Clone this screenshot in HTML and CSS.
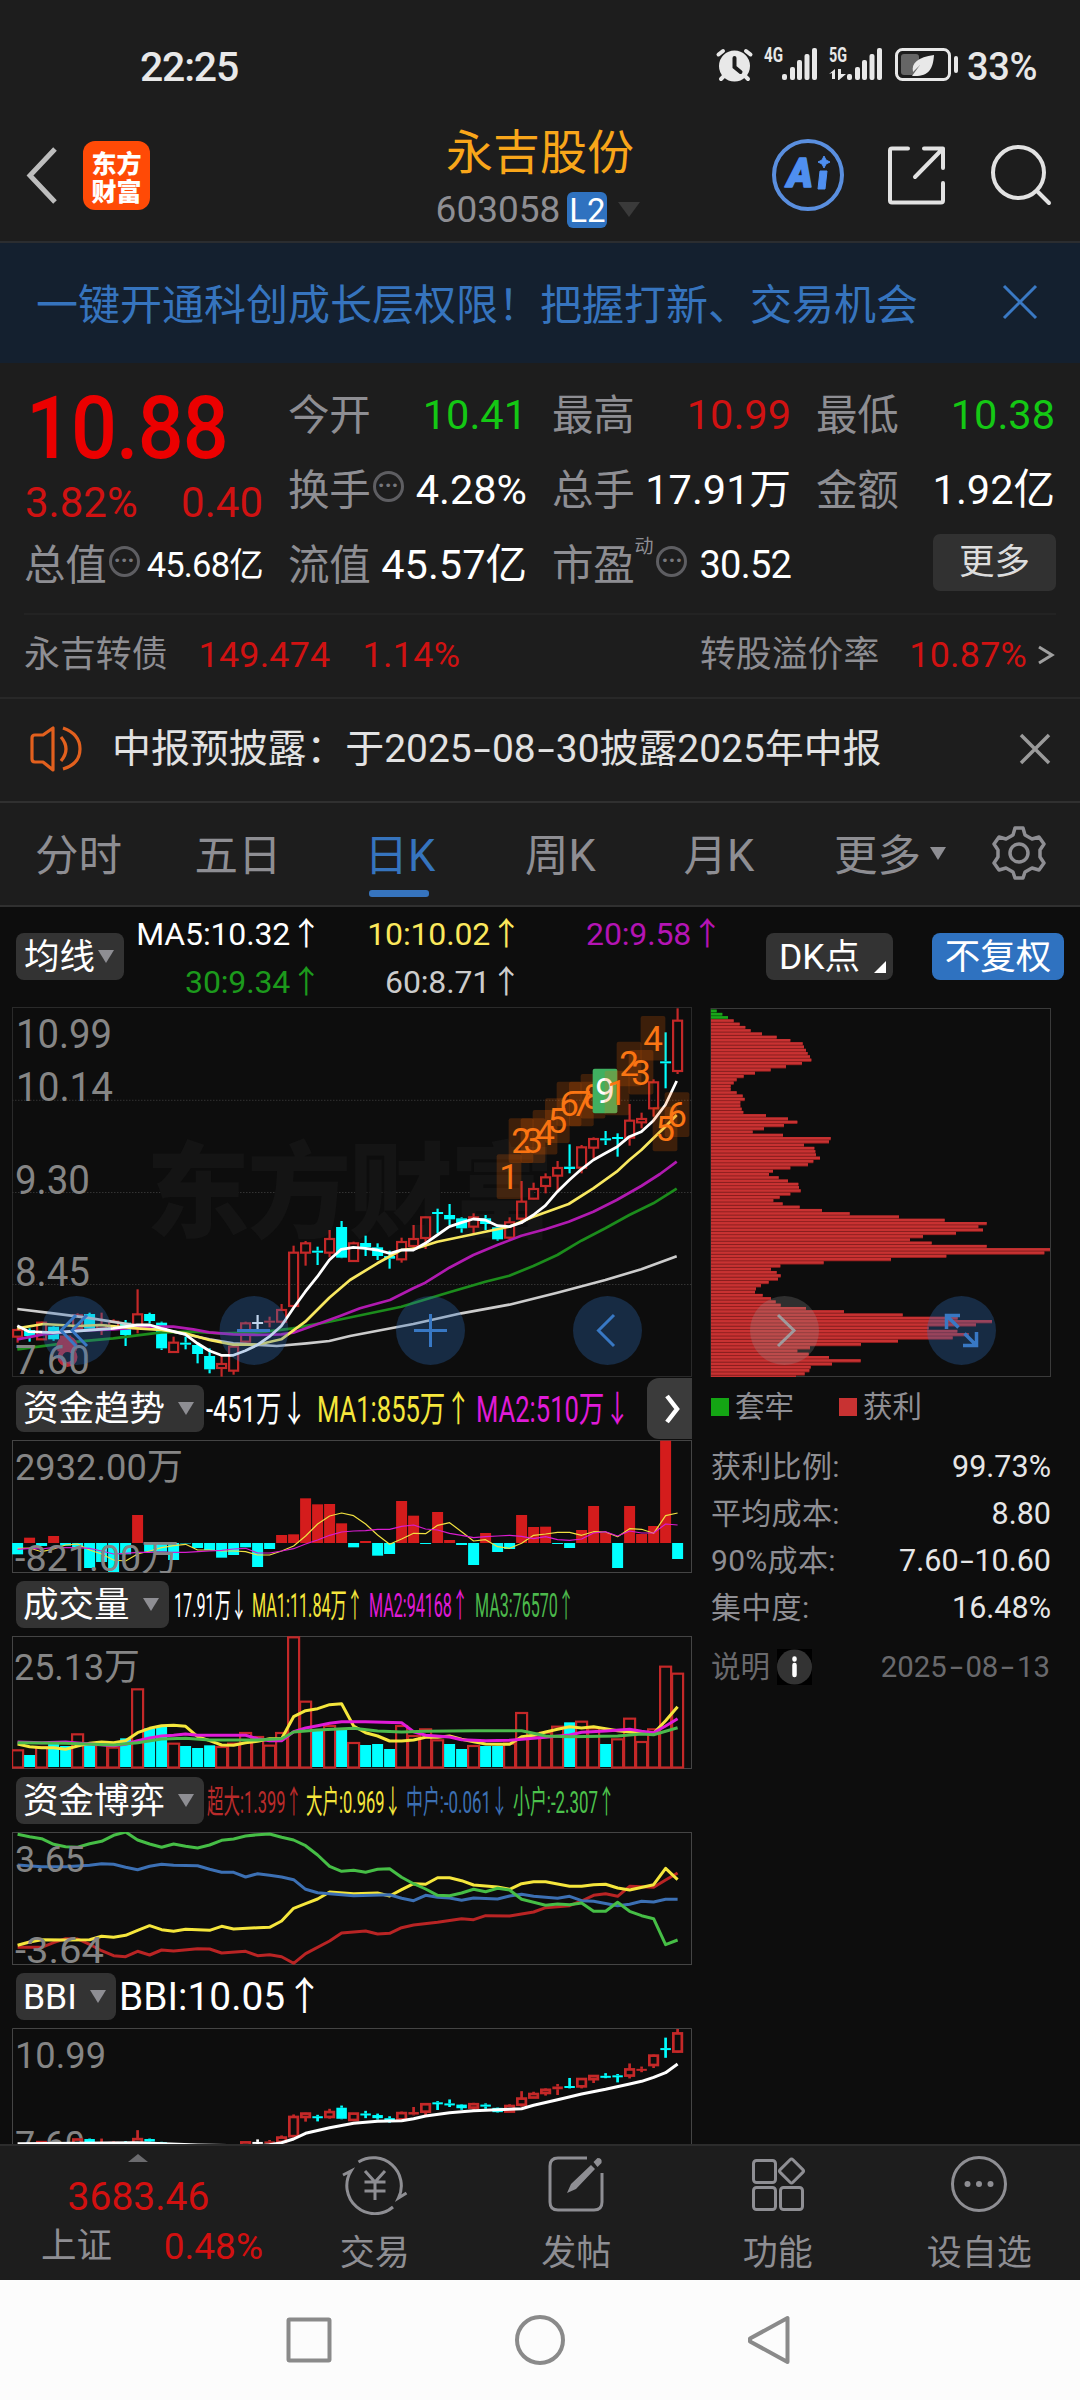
FILE: index.html
```html
<!DOCTYPE html>
<html lang="zh-CN">
<head>
<meta charset="utf-8">
<title>永吉股份 603058</title>
<link rel="stylesheet" href="styles.css">
</head>
<body>
<div class="status">
  <span class="clock">22:25</span>
  <svg class="status-icons" width="245" height="50" viewBox="0 0 245 50">
    <g fill="#e8e8e8" stroke="#e8e8e8" stroke-linecap="round">
      <circle cx="19.500" cy="21" r="15.500" stroke="none"/>
      <path d="M3.500 9.500 8 6M35.500 9.500 31 6M9 31 6 34M30 31l3 3" stroke-width="4" fill="none"/>
      <path d="M19.500 13v9l6 5" stroke="#1d1d1d" stroke-width="4" fill="none"/>
    </g>
    <g fill="#e8e8e8">
      <rect x="67" y="29" width="5" height="6" rx="2"/><rect x="75" y="22" width="5" height="13" rx="2"/><rect x="82" y="15" width="5" height="20" rx="2"/><rect x="89.500" y="9" width="5" height="26" rx="2"/><rect x="97" y="3" width="5" height="32" rx="2"/>
      <rect x="132" y="29" width="5" height="6" rx="2"/><rect x="140" y="22" width="5" height="13" rx="2"/><rect x="147" y="15" width="5" height="20" rx="2"/><rect x="154.500" y="9" width="5" height="26" rx="2"/><rect x="162" y="3" width="5" height="32" rx="2"/>
      <path d="M114 29l6-5v10h-3v-6zM123 24h3v5h5l-7 6h-1z"/>
      <rect x="239" y="11" width="4" height="17" rx="2"/>
      <text x="49" y="17" font-size="20" font-weight="700" textLength="19" lengthAdjust="spacingAndGlyphs">4G</text>
      <text x="114" y="17" font-size="20" font-weight="700" textLength="18" lengthAdjust="spacingAndGlyphs">5G</text>
    </g>
    <rect x="181.500" y="4.500" width="53" height="30" rx="6" fill="none" stroke="#e8e8e8" stroke-width="3"/>
    <rect x="186" y="9" width="18" height="21" rx="3" fill="#666"/>
    <path d="M219 10C203 12 196 18 198 27l7-7-8 11 3 0C214 31 218 24 219 10z" fill="#e8e8e8"/>
  </svg>
  <span class="battery">33%</span>
</div>

<header class="head">
  <svg class="back" width="34" height="58" viewBox="0 0 34 58"><path d="M30 2 5 28.500 30 55" fill="none" stroke="#bdbdbd" stroke-width="5"/></svg>
  <div class="logo"><span>东方</span><span>财富</span></div>
  <div class="title">
    <h1>永吉股份</h1>
    <div class="code"><span>603058</span><b>L2</b><i class="tri"></i></div>
  </div>
  <svg class="head-icons" width="290" height="80" viewBox="0 0 290 80">
    <circle cx="38" cy="41" r="34" fill="none" stroke="#5a8fdf" stroke-width="4"/>
    <g fill="#4f8ff0" stroke="#4f8ff0" stroke-linejoin="round"><text x="17" y="53" font-size="40" font-weight="900" font-style="italic" textLength="26" lengthAdjust="spacingAndGlyphs" stroke-width="1.500">A</text><path d="M50 37h7l-2 18h-7zM54 22l2 4 4 2-4 2-2 4-2-4-4-2 4-2z"/></g>
    <g fill="none" stroke="#e2e2e2" stroke-width="4" stroke-linecap="round" stroke-linejoin="round">
      <path d="M138 14.500h-16q-2 0-2 2v50q0 2 2 2h49q2 0 2-2V49M154 14.500h19V34M172 15.500 145 43"/>
      <circle cx="248.500" cy="38.500" r="25.500"/><path d="m267 57 12 12"/>
    </g>
  </svg>
</header>

<div class="banner">
  <span>一键开通科创成长层权限！把握打新、交易机会</span>
  <svg width="36" height="36" viewBox="0 0 36 36"><path d="M2 2 34 34M34 2 2 34" stroke="#3a79c4" stroke-width="3"/></svg>
</div>

<section class="quote">
  <div class="price-box">
    <strong>10.88</strong>
    <div class="row red"><span>3.82%</span><span>0.40</span></div>
  </div>
  <div class="cell"><label>今开</label><span class="green">10.41</span></div>
  <div class="cell"><label>最高</label><span class="red">10.99</span></div>
  <div class="cell"><label>最低</label><span class="green">10.38</span></div>
  <div class="cell"><label>换手<i class="dots">···</i></label><span>4.28%</span></div>
  <div class="cell"><label>总手</label><span>17.91万</span></div>
  <div class="cell"><label>金额</label><span>1.92亿</span></div>
  <div class="cell"><label>总值<i class="dots">···</i></label><span class="sm">45.68亿</span></div>
  <div class="cell"><label>流值</label><span>45.57亿</span></div>
  <div class="cell"><label>市盈<sup>动</sup><i class="dots">···</i></label><span class="md">30.52</span></div>
  <div class="cell end"><button>更多</button></div>
</section>

<div class="bond">
  <span>永吉转债</span><span class="red b1">149.474</span><span class="red b2">1.14%</span>
  <span class="push">转股溢价率</span><span class="red b3">10.87%</span>
  <svg width="18" height="20" viewBox="0 0 18 20"><path d="M2 2 15 10 2 18" fill="none" stroke="#a0a0a0" stroke-width="3"/></svg>
</div>

<div class="notice">
  <svg width="54" height="48" viewBox="0 0 54 48"><g fill="none" stroke="#e2601e" stroke-width="3.200"><path d="M3 13q0-3 3-3h8L24 3v42L14 37H6q-3 0-3-3z" stroke-linejoin="round"/><path d="M32 12q10 12 0 24M34 3q17 6 17 21T34 44"/></g></svg>
  <span>中报预披露：于2025<i class="dash">-</i>08<i class="dash">-</i>30披露2025年中报</span>
  <svg class="x" width="32" height="32" viewBox="0 0 32 32"><path d="M2 2 30 30M30 2 2 30" stroke="#9a9a9a" stroke-width="3.500"/></svg>
</div>

<nav class="tabs">
  <a>分时</a><a>五日</a><a class="on">日K</a><a>周K</a><a>月K</a><a>更多<i class="tri"></i></a>
  <svg width="56" height="56" viewBox="0 0 56 56"><g fill="none" stroke="#8e8e93" stroke-width="3.500" stroke-linejoin="round"><path d="M24 3h8l2 7 7 4 7-2 5 7-4 6v7l4 6-5 7-7-2-7 4-2 6h-8l-2-6-7-4-7 2-5-7 4-6v-7l-4-6 5-7 7 2 7-4z"/><circle cx="28" cy="28" r="9"/></g></svg>
</nav>

<div class="ma">
  <div class="pill">均线<i class="tri"></i></div>
  <div class="ma-grid">
    <span class="c-w">MA5:10.32<em>↑</em></span><span class="c-y">10:10.02<em>↑</em></span><span class="c-m">20:9.58<em>↑</em></span>
    <span class="c-g">30:9.34<em>↑</em></span><span class="c-s">60:8.71<em>↑</em></span>
  </div>
  <div class="pill dk">DK点</div>
  <div class="pill blue">不复权</div>
</div>

<main class="charts">
  <div class="left">
    <svg id="kline" width="680" height="370" viewBox="12 1007 680 370"></svg>
    <div class="legend"><div class="pill">资金趋势<i class="tri"></i></div>
      <svg width="430" height="63"><g font-size="36"><text x="2" y="45" textLength="101" lengthAdjust="spacingAndGlyphs" fill="#fff">-451万↓</text><text x="113" y="45" textLength="154" lengthAdjust="spacingAndGlyphs" fill="#f5e63c">MA1:855万↑</text><text x="272" y="45" textLength="154" lengthAdjust="spacingAndGlyphs" fill="#e01bd8">MA2:510万↓</text></g></svg>
      <div class="more"><svg width="20" height="38" viewBox="0 0 20 38"><path d="M5 6 15 19 5 32" fill="none" stroke="#fff" stroke-width="4.500"/></svg></div>
    </div>
    <svg id="fund" width="680" height="133" viewBox="12 1440 680 133"></svg>
    <div class="legend"><div class="pill">成交量<i class="tri"></i></div>
      <svg width="430" height="63"><g font-size="33"><text x="5" y="44" textLength="73" lengthAdjust="spacingAndGlyphs" fill="#fff">17.91万↓</text><text x="83" y="44" textLength="111" lengthAdjust="spacingAndGlyphs" fill="#f5e63c">MA1:11.84万↑</text><text x="200" y="44" textLength="99" lengthAdjust="spacingAndGlyphs" fill="#e01bd8">MA2:94168↑</text><text x="306" y="44" textLength="99" lengthAdjust="spacingAndGlyphs" fill="#4cb94c">MA3:76570↑</text></g></svg>
    </div>
    <svg id="volume" width="680" height="133" viewBox="12 1636 680 133"></svg>
    <div class="legend"><div class="pill">资金博弈<i class="tri"></i></div>
      <svg width="430" height="63"><g font-size="32"><text x="3" y="44" textLength="95" lengthAdjust="spacingAndGlyphs" fill="#b92b2b">超大:1.399↑</text><text x="102" y="44" textLength="95" lengthAdjust="spacingAndGlyphs" fill="#f5e63c">大户:0.969↓</text><text x="202" y="44" textLength="102" lengthAdjust="spacingAndGlyphs" fill="#3c70b4">中户:-0.061↓</text><text x="309" y="44" textLength="102" lengthAdjust="spacingAndGlyphs" fill="#4cc24c">小户:-2.307↑</text></g></svg>
    </div>
    <svg id="game" width="680" height="133" viewBox="12 1832 680 133"></svg>
    <div class="legend"><div class="pill">BBI<i class="tri"></i></div>
      <svg width="430" height="63"><text x="3" y="45" font-size="39" textLength="205" lengthAdjust="spacingAndGlyphs" fill="#fff">BBI:10.05↑</text></svg>
    </div>
    <svg id="bbi" width="680" height="116" viewBox="12 2028 680 116"></svg>
  </div>
  <div class="right">
    <svg id="chips" width="342" height="370" viewBox="710 1007 342 370"></svg>
    <div class="keys"><i class="sq g"></i>套牢<i class="sq r"></i>获利</div>
    <dl>
      <dt>获利比例:</dt><dd>99.73%</dd>
      <dt>平均成本:</dt><dd>8.80</dd>
      <dt>90%成本:</dt><dd>7.60<i class="dash">-</i>10.60</dd>
      <dt>集中度:</dt><dd>16.48%</dd>
    </dl>
    <div class="explain"><span>说明</span><span class="info"><svg width="35" height="36" viewBox="0 0 35 36"><circle cx="17.500" cy="18" r="17.500" fill="#333"/><path d="M17.500 16v10M17.500 9.500v1" stroke="#fff" stroke-width="4.500" stroke-linecap="round"/></svg></span><time>2025<i class="dash">-</i>08<i class="dash">-</i>13</time></div>
  </div>
  <svg class="controls" width="1080" height="70" viewBox="0 1296 1080 70">
    <g fill="#2f72c0" fill-opacity=".3"><circle cx="76.500" cy="1330.500" r="34.500"/><circle cx="254" cy="1330.500" r="34.500"/><circle cx="430.500" cy="1330.500" r="34.500"/><circle cx="607.500" cy="1330.500" r="34.500"/><circle cx="961.500" cy="1330.500" r="34.500"/></g>
    <circle cx="784.500" cy="1330.500" r="34.500" fill="#999" fill-opacity=".25"/>
    <g fill="none" stroke="#3878c4" stroke-width="3">
      <path d="M76 1315 61 1330.500 76 1346M87 1315 72 1330.500 87 1346M237 1330.500h33M414 1330.500h33M430.500 1314v33M614 1315l-15.500 15.500 15.500 15.500"/>
      <path d="M946.500 1329v-13.500h13.500M947 1316l11.500 11.500M976.500 1332v13.500h-13.500M976 1345l-11.500-11.500" stroke-width="3.500"/>
      <path d="M778 1315l16 15.500-16 15.500" stroke="#a09a9c"/>
    </g>
  </svg>
</main>

<footer class="bar">
  <div class="index">
    <i class="up"></i>
    <strong>3683.46</strong>
    <div><span>上证</span><b>0.48%</b></div>
  </div>
  <div class="item"><svg width="68" height="62" viewBox="0 0 68 62"><g fill="none" stroke="#8e8e93" stroke-width="3"><path d="M17.500 9a28 28 0 0 1 40 36l8-5M52 54a28 28 0 0 1-42-36l-8 4" /><path d="M24 18l10 11 10-11M23.500 29h21M23.500 38h21M34 29v18"/></g></svg><span>交易</span></div>
  <div class="item"><svg width="58" height="62" viewBox="0 0 58 62"><path d="M40 5H11q-8 0-8 8v36q0 8 8 8h36q8 0 8-8V20" fill="none" stroke="#8e8e93" stroke-width="3"/><path d="M20 40l4-9 20-19 4 4-19 20zM46.500 9l4-4q5 0 4 5l-4 4z" fill="#8e8e93"/></svg><span>发帖</span></div>
  <div class="item"><svg width="58" height="62" viewBox="0 0 58 62"><g fill="none" stroke="#8e8e93" stroke-width="3"><rect x="4.500" y="7.500" width="22" height="22" rx="3"/><rect x="4.500" y="34.500" width="22" height="22" rx="3"/><rect x="31.500" y="34.500" width="22" height="22" rx="3"/><rect x="33.500" y="9" width="18" height="18" rx="2" transform="rotate(45 42.500 18)"/></g></svg><span>功能</span></div>
  <div class="item"><svg width="62" height="62" viewBox="0 0 62 62"><circle cx="31" cy="31" r="26.500" fill="none" stroke="#8e8e93" stroke-width="3"/><g fill="#8e8e93"><circle cx="19.500" cy="31" r="3"/><circle cx="31" cy="31" r="3"/><circle cx="42.500" cy="31" r="3"/></g></svg><span>设自选</span></div>
</footer>
<div class="sysnav">
  <svg width="1080" height="120" viewBox="0 2280 1080 120"><g fill="none" stroke="#8a8a8a" stroke-width="4" stroke-linejoin="round"><rect x="288.500" y="2319.500" width="41" height="41" rx="1"/><circle cx="540" cy="2340" r="23"/><path d="M787.500 2318v44L750 2341.500v-3z"/></g></svg>
</div>
<script src="script.js"></script>
</body>
</html>
```
FILE: styles.css
```css
* { box-sizing: border-box; }
body { margin: 0; width: 1080px; height: 2400px; overflow: hidden; background: #1d1d1d; color: #fff; font-family: Roboto, "Noto Sans CJK SC", sans-serif; }
svg { display: block; flex: none; font-family: Roboto, "Noto Sans CJK SC", sans-serif; }
i, em { font-style: normal; }
.red { color: #d01212; }
.green { color: #14c814; }
.tri { display: block; border: 8px solid transparent; border-top: 13px solid #8e8e93; border-bottom: 0; }
.dash { display: inline-block; width: .64em; text-align: center; transform: scaleX(1.6); }

.status { height: 110px; display: flex; align-items: flex-start; padding: 42px 0 0 140px; color: #e8e8e8; font-weight: 500; line-height: 50px; }
.clock { font-size: 41px; letter-spacing: -1.2px; width: 575px; }
.status-icons { margin-top: 3px; }
.battery { font-size: 38px; margin-left: 7px; letter-spacing: -.3px; }

.head { height: 133px; border-bottom: 2px solid #2b2d30; display: flex; position: relative; padding: 30px 25px; }
.back { margin-top: 7px; }
.logo { flex: none; width: 67px; height: 69px; margin: 1px 0 0 24px; border-radius: 12px; background: #ff4a06; display: flex; flex-direction: column; align-items: center; justify-content: center; font: 900 25px/28px "Noto Sans CJK SC", sans-serif; }
.title { flex: none; width: 400px; margin: -15px 0 0 190px; display: flex; flex-direction: column; align-items: center; }
.title h1 { margin: 0; font-size: 47px; line-height: 56px; font-weight: 400; color: #f9a61a; }
.code { display: flex; align-items: center; height: 50px; margin: 7px 0 0 -4px; font-size: 37px; color: #8e8e93; }
.code b { margin-left: 7px; width: 40px; height: 36px; line-height: 37px; border-radius: 6px; background: #2f72c0; color: #fff; font-weight: 400; font-size: 33px; text-align: center; }
.code .tri { margin-left: 11px; border-width: 15px 11px 0; border-top-color: #3a3a3a; }
.head-icons { margin: -6px 0 0 30px; }

.banner { height: 120px; background: #14202f; display: flex; align-items: center; justify-content: space-between; padding: 0 42px 3px 36px; font-size: 42px; color: #3674be; }

.quote { display: grid; grid-template-columns: repeat(4, 238px); grid-template-rows: repeat(3, 75px); column-gap: 26px; padding: 14px 25px 0; height: 250px; }
.price-box { grid-row: 1 / 3; }
.price-box strong { display: block; height: 90px; margin-left: 1px; font-size: 87px; line-height: 103px; font-weight: 500; color: #eb0000; letter-spacing: -1px; transform: scaleX(.93); transform-origin: 0 0; }
.row { display: flex; justify-content: space-between; font-size: 42px; line-height: 68px; }
.price-box .row { margin-top: 2px; }
.cell { display: flex; justify-content: space-between; align-items: center; font-size: 41.500px; line-height: 52px; letter-spacing: 0; white-space: nowrap; }
.cell label { display: flex; align-items: center; color: #8e8e93; letter-spacing: -.2px; margin: 2px 0 0 -1px; }
.cell .sm { font-size: 34.500px; letter-spacing: -.8px; }
.cell .md { font-size: 38px; letter-spacing: -.8px; }
.cell.end { justify-content: flex-end; }
.dots { width: 31px; height: 31px; margin: -9px 0 0 2px; border: 3px solid #5e5e62; border-radius: 50%; display: flex; align-items: center; justify-content: center; color: #77777c; font-size: 23px; line-height: 20px; font-weight: 700; letter-spacing: 0; }
sup { font-size: 19px; line-height: 20px; margin-top: -38px; }
sup + .dots { margin-left: 3px; }
button { width: 123px; height: 57px; margin: -4px -1px 0 0; border: 0; border-radius: 7px; background: #313131; color: #ddd; font: 35.500px/57px Roboto, "Noto Sans CJK SC", sans-serif; padding: 0; }

.bond { height: 84px; margin: 0 24px; border-top: 2px solid #232323; display: flex; align-items: center; font-size: 35.900px; line-height: 50px; color: #8e8e93; padding: 0 1px 3px 0; }
.b1 { margin-left: 31px; letter-spacing: .2px; }
.b2 { margin-left: 32px; letter-spacing: .3px; }
.push { margin-left: auto; }
.b3 { margin-left: 30px; letter-spacing: .2px; }
.bond svg { margin-left: 10px; }

.notice { height: 106px; border-top: 2px solid #282828; border-bottom: 2px solid #303030; display: flex; align-items: center; padding: 0 29px 2px 29px; font-size: 38.900px; line-height: 50px; color: #e2e2e2; }
.notice span { margin-left: 29px; }
.notice .dash { width: .52em; }
.notice .x { margin-left: auto; }

.tabs { height: 104px; border-bottom: 2px solid #303030; display: grid; grid-template-columns: 157px 162px 162px 159px 158px 184px 98px; align-items: center; justify-items: center; color: #8e8e93; font-size: 43.500px; }
.tabs a { height: 102px; line-height: 107px; display: flex; position: relative; }
.tabs .on { color: #3674be; }
.tabs .on::after { content: ""; position: absolute; left: 50%; bottom: 8px; width: 60px; height: 7px; margin-left: -31px; border-radius: 3px; background: #3674be; }
.tabs .tri { margin: 44px 0 0 9px; }
.tabs svg { margin: -3px 0 0 -25px; }

.ma { height: 100px; background: #0d0d0d; display: flex; align-items: flex-start; padding-left: 16px; }
.pill { height: 47px; border-radius: 8px; background: #333; display: flex; align-items: center; font-size: 35.500px; line-height: 48px; padding: 0 10px 0 7px; white-space: nowrap; }
.pill .tri { margin-left: 13px; }
.ma .pill { margin-top: 26px; width: 108px; padding-left: 8px; }
.ma .pill .tri { margin-left: 3px; }
.ma-grid { width: 594px; display: grid; grid-template-columns: 198px 200px 201px; grid-auto-rows: 48px; padding-top: 3px; text-align: right; font-size: 32px; line-height: 48px; white-space: nowrap; letter-spacing: -.15px; }
.ma .dk { margin-left: 48px; width: 127px; padding-left: 13px; position: relative; }
.dk::after { content: ""; position: absolute; right: 7px; bottom: 7px; border: 6px solid transparent; border-right-color: #fff; border-bottom-color: #fff; }
.ma .blue { margin-left: 39px; width: 132px; padding: 0; justify-content: center; background: #2f72c0; }
.c-y { color: #fbe85c; } .c-m { color: #b414b4; } .c-g { color: #1c9a1c; } .c-s { color: #ccc; }

.charts { height: 1137px; background: #0d0d0d; display: flex; position: relative; padding-left: 12px; overflow: hidden; }
.left { width: 680px; }
.right { width: 342px; margin-left: 18px; color: #8e8e93; }
.legend { height: 63px; display: flex; padding-left: 4px; position: relative; }
.legend .pill { margin-top: 8px; }
.more { position: absolute; right: 0; top: 1px; width: 45px; height: 61px; border-radius: 12px 0 0 12px; background: #3b3b3b; display: flex; align-items: center; justify-content: center; }
.more svg { margin-left: 4px; }
.keys { display: flex; align-items: center; height: 60px; font-size: 29.500px; line-height: 40px; padding-left: 1px; }
.sq { width: 18px; height: 18px; margin-right: 6px; background: #14a514; }
.sq.r { background: #c83232; margin-left: 45px; }
dl { margin: 6px 1px 0 1px; display: grid; grid-template-columns: auto auto; grid-auto-rows: 47.200px; align-items: center; font-size: 30px; line-height: 40px; }
dt { letter-spacing: .3px; }
dd { margin: 0; text-align: right; color: #e6e6e6; font-size: 30.500px; }
dd .dash { width: .52em; }
.explain { display: flex; align-items: center; height: 60px; margin-top: 5px; padding: 0 2px 0 1px; font-size: 29.500px; line-height: 40px; color: #69696c; }
.info { background: #000; margin-left: 7px; }
time { margin-left: auto; font-size: 29.300px; }
.controls { position: absolute; left: 0; top: 289px; }

.bar { height: 136px; border-top: 2px solid #2c2c2c; display: grid; grid-template-columns: 274px repeat(4, 201.500px); color: #8e8e93; }
.index { position: relative; text-align: center; padding-top: 23px; }
.index .up { position: absolute; left: 128px; top: 8px; border: 10px solid transparent; border-bottom: 8px solid #6b6b6e; border-top: 0; }
.index strong { display: block; font-weight: 400; font-size: 39px; line-height: 56px; color: #d21010; margin-left: 3px; }
.index div { display: flex; justify-content: space-between; padding: 0 11px 0 41px; font-size: 35.500px; line-height: 43px; }
.index b { font-weight: 400; color: #d21010; font-size: 37px; }
.item { display: flex; flex-direction: column; align-items: center; padding-top: 7px; font-size: 35px; line-height: 50px; }
.item span { margin-top: 14px; }
.sysnav { height: 120px; background: #fcfcfc; }
```
FILE: script.js
```js
// Samples are stored in thirds of a pixel, measured down from the top of each panel group.
const X0 = 17.6, STEP = 12;
const RED = '#c42828', CYAN = '#00ffff';
const px = i => X0 + STEP * i;
const rect = (x, y, w, h, a) => `<rect x="${x.toFixed(2)}" y="${y.toFixed(2)}" width="${w.toFixed(2)}" height="${Math.max(h, 0.5).toFixed(2)}" ${a}/>`;
const line = (pts, color, w) => `<polyline points="${pts.map(p => p[0].toFixed(1) + ',' + p[1].toFixed(1)).join(' ')}" fill="none" stroke="${color}" stroke-width="${w}" stroke-linejoin="round"/>`;
const frame = (top, h, c) => rect(12.500, top + 0.5, 679, h - 1, `fill="none" stroke="${c}"`);
const label = (x, y, s, size, len) => `<text x="${x}" y="${y}" font-size="${size}" fill="#858585" textLength="${len}" lengthAdjust="spacingAndGlyphs">${s}</text>`;
const dense = (str, base) => str.split(' ').map((v, i) => [px(i), base + v / 3]);
const sparse = (str, base) => str.split(' ').map(s => s.split(':').map(Number)).map(([i, v]) => [px(i), base + v / 3]);
const put = (id, s) => { document.getElementById(id).innerHTML = s; };

const candles = `R,985,990,1010,1028 C,985,990,1008,1025 R,965,968,1018,1020 C,978,980,1018,1022 R,1005,1010,1035,1040 R,940,946,985,990 C,938,942,986,986 R,938,975,985,1005 R,958,965,985,990 C,960,968,1005,1038 R,868,943,985,1000 C,938,942,963,970 C,965,968,1045,1050 R,1010,1028,1056,1058 C,1010,1028,1034,1048 C,1030,1035,1062,1090 C,1045,1068,1108,1120 R,1068,1092,1104,1130 R,1035,1040,1112,1124 R,965,970,1025,1028 W,945,966,972,988 R,950,962,968,982 R,912,930,965,970 R,737,758,918,922 R,723,730,758,797 C,740,752,758,795 R,690,717,758,772 C,663,681,773,773 R,725,730,783,785 C,707,729,742,768 C,730,742,768,780 C,752,768,776,806 R,713,726,778,788 R,675,717,738,745 R,650,652,714,747 C,626,636,642,700 C,612,645,658,675 C,652,655,685,698 R,640,652,680,700 C,645,655,672,690 C,680,682,718,722 R,652,667,713,718 R,543,605,656,672 R,548,567,596,598 R,520,532,558,580 R,483,504,527,575 C,433,500,507,520 R,435,442,503,520 R,412,417,443,475 C,393,415,421,435 C,400,411,417,470 R,312,362,413,437 R,338,357,367,385 R,238,247,325,350 C,97,184,190,265 R,25,62,213,222`
  .split(' ').map(s => s.split(',')).map(([t, ...v]) => [t, ...v.map(Number)]);

function drawCandles(map, bw, sw) {
  return candles.map(([t, h, a, b, l], i) => {
    const x = px(i), c = t === 'R' ? RED : t === 'C' ? CYAN : '#fff';
    const [H, A, B, L] = [h, a, b, l].map(map);
    const thin = B - A < 3;
    let s = rect(x - sw / 2, H, sw, A - H, `fill="${c}"`) + rect(x - sw / 2, B, sw, L - B, `fill="${c}"`);
    s += t === 'R' && !thin
      ? rect(x - bw / 2 + 1, A, bw - 2, B - A, `fill="none" stroke="${c}" stroke-width="${sw}"`)
      : rect(x - bw / 2, A, bw, Math.max(B - A, 2), `fill="${c}"`);
    return s;
  }).join('');
}

// Daily K line with five moving averages
const free = str => str.split(' ').map(s => s.split(',').map(Number)).map(([x, y]) => [x / 3, 1000 + y / 3]);
const marks = [[1, 440, 463], [2, 476, 355], [3, 512, 355], [4, 548, 330], [5, 585, 295], [6, 620, 245], [7, 657, 245], [8, 692, 222], [9, 728, 206], [1, 764, 212], [2, 800, 125], [3, 836, 150], [4, 872, 48], [5, 908, 320], [6, 944, 277]];
put('kline',
  frame(1007, 370, '#2a2a2a') +
  [1100.3, 1192.5, 1284.5].map(y => `<path d="M12 ${y}H692" stroke="#333" stroke-dasharray="1.500 1.500"/>`).join('') +
  `<text x="146" y="1230" font-size="104" font-weight="900" fill="#141414" textLength="408">东方财富</text>` +
  drawCandles(v => 1000 + v / 3, 11, 2.2) +
  line(free('52,927 160,940 260,953 411,977 520,995 628,1018 700,1030 830,1038 920,1030 988,1023 1050,1008 1240,972 1384,940 1528,914 1672,878 1816,840 1924,808 2030,769'), '#ccc', 2.7) +
  line(free('52,1048 232,1025 340,1015 484,997 580,995 660,1000 772,998 880,985 988,965 1060,950 1204,920 1348,877 1456,845 1528,827 1600,798 1672,765 1744,722 1816,685 1888,645 1960,610 2030,566'), '#1c8c1c', 2.7) +
  line(free('52,1018 130,1003 232,992 340,988 450,980 520,980 580,988 628,997 700,1003 772,1005 844,1003 880,998 960,970 1020,948 1080,925 1170,900 1240,865 1276,848 1348,803 1420,765 1492,735 1564,707 1636,688 1706,665 1780,635 1850,600 1924,558 1980,522 2030,485'), '#b01ab0', 2.7) +
  line(free('52,985 130,972 232,978 300,975 411,985 484,990 556,1000 628,1020 700,1034 772,1034 844,1018 916,965 988,893 1050,840 1132,790 1204,750 1250,745 1312,725 1384,710 1456,695 1528,680 1600,650 1706,612 1780,565 1850,515 1888,480 1924,450 1960,415 1996,380 2030,345'), '#f8e860', 2.7) +
  line(free('52,977 87,995 160,998 232,993 340,985 411,975 450,975 484,985 556,1003 592,1030 628,1052 664,1066 700,1066 736,1052 772,1035 808,1010 844,978 880,925 916,875 952,830 988,780 1024,748 1060,742 1096,745 1132,750 1170,760 1204,750 1240,750 1276,730 1312,705 1348,680 1384,668 1420,657 1456,660 1492,677 1528,680 1564,668 1600,645 1636,617 1672,575 1708,540 1744,508 1780,480 1816,460 1852,440 1888,410 1924,395 1960,362 1996,315 2030,243'), '#fff', 2.8) +
  '<g fill="none" stroke="#b82a36" stroke-width="5"><path d="M59.500 1349a8 8 0 1 1 15 0z" fill="#b82a36"/><circle cx="67.500" cy="1357" r="7.500"/></g>' +
  label(16, 1047.5, '10.99', 41, 96) + label(16, 1101, '10.14', 41, 97) + label(15, 1194, '9.30', 41, 75) + label(15, 1286, '8.45', 41, 75) + label(15, 1374, '7.60', 41, 75) +
  marks.map(([n, x, y]) => {
    const X = 350 + x / 3, Y = 1000 + y / 3, nine = n === 9;
    return rect(X, Y, 24.7, 44.6, `rx="2" fill="${nine ? '#40b060' : '#ff6a00'}" fill-opacity="${nine ? 1 : 0.2}"`) +
      `<text x="${X + 12.300}" y="${Y + 34.600}" font-size="35" text-anchor="middle" fill="${nine ? '#fff' : '#fa7614'}">${n}</text>`;
  }).join(''));

// Fund trend
const fund = '553 503 528 498 527 532 594 576 606 553 435 545 545 570 519 534 540 563 555 532 591 537 495 493 385 403 402 460 532 513 557 552 393 437 522 426 510 525 585 489 546 537 435 471 470 522 534 480 408 489 594 408 492 468 212 567'.split(' ');
put('fund', frame(1440, 133, '#444') +
  fund.map((v, i) => v < 519
    ? rect(px(i) - 5.5, 1370 + v / 3, 11, (519 - v) / 3, 'fill="#d41c1c"')
    : rect(px(i) - 5.5, 1543, 11, (v - 519) / 3, `fill="${CYAN}"`)).join('') +
  line(dense('535 534 545 537 525 522 540 552 570 573 552 543 533 527 523 540 540 543 543 545 555 555 543 528 498 462 438 429 437 462 495 523 507 490 491 466 458 485 513 509 530 535 520 496 492 487 487 496 485 486 500 476 478 490 437 429', 1370), '#f0e040', 1.2) +
  line(dense('538 535 537 532 533 533 535 543 552 550 547 547 546 547 547 545 543 541 537 535 549 549 543 536 522 510 496 486 483 482 478 478 469 465 477 480 490 496 503 500 498 496 499 506 500 509 511 507 489 485 498 483 489 489 462 465', 1370), '#d81cd0', 1.2) +
  label(15, 1480, '2932.00万', 37, 168) + label(15, 1571, '-821.00万', 37, 164));

// Volume
const vol = 'R1138 C1155 R1128 C1118 C1128 R1090 C1120 R1120 R1130 C1105 R955 C1075 C1068 R1118 C1128 C1134 C1126 R1128 R1118 R1086 R1098 R1124 R1086 R799 R992 C1080 R1065 C1075 R1116 C1125 C1122 C1137 R1065 R1095 R1075 R1108 C1122 C1137 R1125 C1128 C1128 R1118 R1026 R1098 R1085 R1067 C1057 R1052 R1072 C1122 R1105 R1043 R1113 R1075 R887 R908'.split(' ');
put('volume', frame(1636, 133, '#444') +
  vol.map((s, i) => {
    const y = 1370 + s.slice(1) / 3;
    return s[0] === 'R' ? rect(px(i) - 5.5, y + 1, 11, 1766.500 - y, `fill="none" stroke="${RED}" stroke-width="2.200"`) : rect(px(i) - 5.5, y, 11, 1767 - y, `fill="${CYAN}"`);
  }).join('') +
  line(dense('1122 1130 1133 1133 1138 1128 1120 1116 1118 1112 1088 1075 1067 1066 1069 1100 1112 1125 1126 1118 1114 1106 1106 1040 1022 1016 1004 1001 1068 1088 1098 1113 1113 1110 1102 1102 1098 1108 1115 1122 1123 1123 1100 1096 1086 1078 1070 1074 1070 1076 1082 1086 1088 1090 1052 1010', 1370), '#f5e63c', 3) +
  line(sparse('0:1116 2:1118 4:1116 6:1122 8:1127 9:1123 10:1112 11:1104 12:1098 13:1096 14:1092 15:1096 19:1096 20:1106 21:1112 22:1112 23:1085 24:1074 25:1067 26:1060 27:1055 29:1055 32:1058 33:1085 34:1096 36:1101 37:1109 39:1112 41:1111 44:1102 46:1095 47:1087 49:1083 51:1078 52:1084 53:1088 54:1068 55:1046', 1370), '#e01bd8', 3) +
  line(sparse('0:1118 4:1120 8:1125 10:1118 12:1107 14:1105 16:1110 20:1110 22:1106 23:1086 25:1080 28:1075 30:1083 32:1086 34:1084 38:1082 42:1082 43:1090 44:1098 46:1100 50:1098 52:1092 53:1094 55:1073', 1370), '#4cb94c', 3) +
  label(14, 1680, '25.13万', 37, 126));

// Fund game
put('game', frame(1832, 133, '#444') +
  line(sparse('0:592 2:592 3:578 4:566 5:567 6:583 7:602 8:617 9:620 10:604 11:615 12:600 13:603 15:596 16:597 17:609 19:604 20:617 21:614 22:620 23:640 24:611 26:573 27:549 29:543 30:552 31:550 32:533 33:525 35:517 37:506 38:509 39:497 41:498 43:486 44:473 46:467 47:453 48:436 49:431 50:439 51:409 53:412 54:390 55:369', 1750), '#b92424', 3) +
  line(sparse('0:586 1:576 2:569 4:570 6:569 7:559 8:562 9:556 10:541 11:527 12:539 13:544 14:538 16:541 17:529 18:537 20:533 21:532 22:513 23:475 24:461 25:447 26:426 28:431 30:429 31:438 32:419 33:401 34:403 35:383 36:383 37:392 38:405 40:411 41:418 42:401 43:395 44:395 46:409 47:409 48:404 49:403 50:414 51:420 53:404 54:355 55:389', 1750), '#f5e63c', 3) +
  line(sparse('0:345 2:350 4:350 6:346 7:341 8:343 9:352 10:359 11:349 12:343 13:346 15:347 16:358 17:367 18:367 19:381 20:371 21:376 22:381 23:389 24:418 25:428 26:431 28:437 31:434 32:445 33:452 34:436 35:442 36:444 37:451 38:444 40:447 41:438 42:433 43:439 45:445 46:439 47:452 48:454 50:467 51:463 52:454 53:456 54:448 55:448', 1750), '#3c70b4', 3) +
  line(dense('253 260 266 283 290 292 281 274 256 246 270 282 292 282 289 294 285 271 267 258 254 252 262 270 287 315 349 364 361 367 358 356 382 401 417 436 437 429 418 425 415 420 448 457 466 462 464 459 484 484 457 484 497 506 584 570', 1750), '#46be46', 3) +
  label(15, 1872, '3.65', 37, 70) + label(15, 1963, '-3.64', 37, 89));

// BBI
put('bbi', `<path d="M12.500 2144V2028.500H691.500V2144" fill="none" stroke="#444"/>` +
  label(15, 2068, '10.99', 37, 91) + label(15, 2157, '7.60', 37, 70) +
  drawCandles(v => 1750 + (837 + (v - 25) * 0.36) / 3, 10.5, 2.7) +
  line(sparse('0:1181 10:1178 15:1185 20:1188 21:1184 22:1178 23:1167 24:1150 26:1133 28:1120 30:1114 32:1112 33:1106 34:1098 36:1088 38:1082 41:1078 42:1076 43:1066 45:1049 47:1032 49:1018 51:1002 52:994 53:982 54:968 55:942', 1750), '#fff', 3));

// Chip distribution
const chips = '80 97 114 131 149 166 182 216 260 301 338 342 348 353 360 364 336 288 242 195 161 140 131 122 122 140 158 164 151 151 155 160 228 294 322 282 222 188 279 422 417 342 373 376 378 390 370 354 301 249 237 266 294 325 327 332 301 269 250 278 329 396 479 627 764 890 865 879 798 699 660 725 890 1080 1063 769 603 401 271 243 260 272 264 236 213 198 195 218 243 257 272 348 462 638 803 906 858 716 802 836 788 624 513 360 322 356 417 512 426 362 358 344 318'.split(' ');
put('chips', rect(711, 1008.5, 339.5, 368, 'fill="none" stroke="#3a3a3a"') +
  chips.map((v, i) => {
    const y = 1009.6 + i * 3.268, w = (v - 63) / 3, g = i < 3;
    return rect(711, y, w, 3.3, `fill="${g ? '#0c660c' : '#8c1e1e'}"`) + rect(711, y, w, 2.4, `fill="${g ? '#1aa51a' : '#c83232'}"`);
  }).join(''));
```
